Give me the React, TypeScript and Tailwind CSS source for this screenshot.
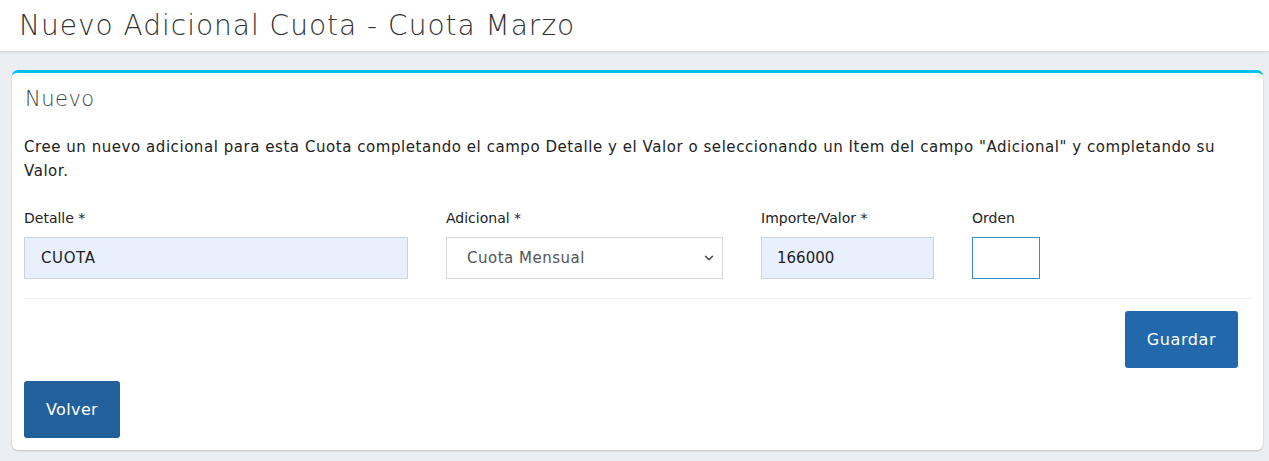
import { ChevronDown } from "lucide-react";

const font = { fontFamily: '"DejaVu Sans", "Liberation Sans", sans-serif' };

export default function App() {
  return (
    <div className="min-h-[461px] bg-[#ebeef2] text-[#222]" style={font}>
      <header className="h-[51px] bg-white shadow-[0_1px_3px_rgba(0,0,0,0.12)] px-[19px] flex items-center">
        <h1 className="text-[28px] font-extralight tracking-[1px] text-[#333] leading-none">Nuevo Adicional Cuota - Cuota Marzo</h1>
      </header>

      <div className="pl-[12px] pr-[6px] pt-[19px] pb-[10px]">
        <div className="rounded-[6px] border-t-[3px] border-[#00c0ef] bg-white shadow-[0_1px_2px_rgba(0,0,0,0.2)]">
          <div className="px-[13px] pt-[12px]">
            <h2 className="text-[21px] font-extralight tracking-[0.5px] text-[#444] leading-[28px]">Nuevo</h2>
          </div>
          <div className="px-[12px] pt-[22px] pb-[12px]">
            <p className="text-[15px] tracking-[0.55px] leading-[24px] text-[#222]">
              Cree un nuevo adicional para esta Cuota completando el campo Detalle y el Valor o seleccionando un Item del campo "Adicional" y completando su Valor.
            </p>

            <div className="mt-[25px] grid grid-cols-[384px_277px_173px_68px] gap-x-[38px]">
              <Field label="Detalle *">
                <div className="h-[42px] border border-[#ccd3dd] bg-[#e8f0fe] px-[16px] flex items-center text-[15px] tracking-[0.6px] text-[#222]">CUOTA</div>
              </Field>
              <Field label="Adicional *">
                <div className="h-[42px] border border-[#d3d6da] bg-white pl-[20px] pr-[6px] flex items-center justify-between text-[15px] tracking-[0.5px] text-[#555]">
                  <span>Cuota Mensual</span>
                  <ChevronDown size={14} strokeWidth={2.5} className="text-[#444]" />
                </div>
              </Field>
              <Field label="Importe/Valor *">
                <div className="h-[42px] border border-[#ccd3dd] bg-[#e8f0fe] px-[15px] flex items-center text-[15px] text-[#222]">166000</div>
              </Field>
              <Field label="Orden">
                <div className="h-[42px] border border-[#3c8dbc] bg-white" />
              </Field>
            </div>

            <div className="mt-[19px] border-t border-[#eef0f2]" />

            <div className="flex justify-end pt-[12px] pr-[13px]">
              <button className="h-[57px] w-[113px] rounded-[3px] bg-[#2169ab] text-white text-[16px] tracking-[0.6px]">Guardar</button>
            </div>
            <div className="pt-[13px]">
              <button className="h-[57px] w-[96px] rounded-[3px] bg-[#21609b] text-white text-[16px] tracking-[0.4px]">Volver</button>
            </div>
          </div>
        </div>
      </div>
    </div>
  );
}

function Field({ label, children }: { label: string; children: React.ReactNode }) {
  return (
    <div className="flex flex-col">
      <label className="text-[14px] font-medium text-[#222] leading-[20px] mb-[9px]">{label}</label>
      {children}
    </div>
  );
}
